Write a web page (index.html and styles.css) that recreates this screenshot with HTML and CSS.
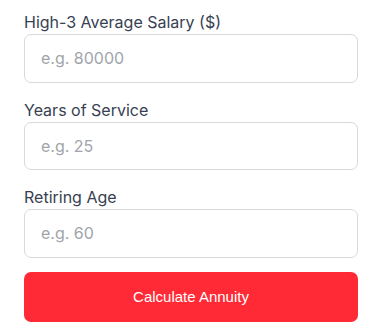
FILE: index.html
```html
<!DOCTYPE html>
<html>
<head>
<meta charset="utf-8">
<link rel="stylesheet" href="styles.css">
</head>
<body>
<form class="form">
  <div class="field">
    <label class="label">High-3 Average Salary ($)</label>
    <input class="input" type="text" placeholder="e.g. 80000">
  </div>
  <div class="field">
    <label class="label">Years of Service</label>
    <input class="input" type="text" placeholder="e.g. 25">
  </div>
  <div class="field">
    <label class="label">Retiring Age</label>
    <input class="input" type="text" placeholder="e.g. 60">
  </div>
  <button class="btn" type="button">Calculate Annuity</button>
</form>
</body>
</html>
```
FILE: styles.css
```css
html, body { margin: 0; padding: 0; background: #fff; }
body { font-family: Inter, "Noto Sans", sans-serif; }
.form {
  display: flex;
  flex-direction: column;
  gap: 15px;
  padding: 10px 23px 0 24px;
}
.field { display: flex; flex-direction: column; }
.label {
  font-size: 16px;
  line-height: 24px;
  color: #374151;
}
.input {
  box-sizing: border-box;
  height: 48.5px;
  width: 100%;
  border: 1px solid #d9d9d9;
  border-radius: 7px;
  padding: 0 16px;
  font-family: Inter, "Noto Sans", sans-serif;
  font-size: 16px;
  color: #111;
  outline: none;
}
.input::placeholder { color: #a0a4ab; }
.btn {
  height: 50px;
  border: none;
  border-radius: 7px;
  background: #ff2a36;
  color: #fff;
  font-family: "Liberation Sans", Arial, sans-serif;
  font-size: 15px;
  margin-top: -1px;
}
```
